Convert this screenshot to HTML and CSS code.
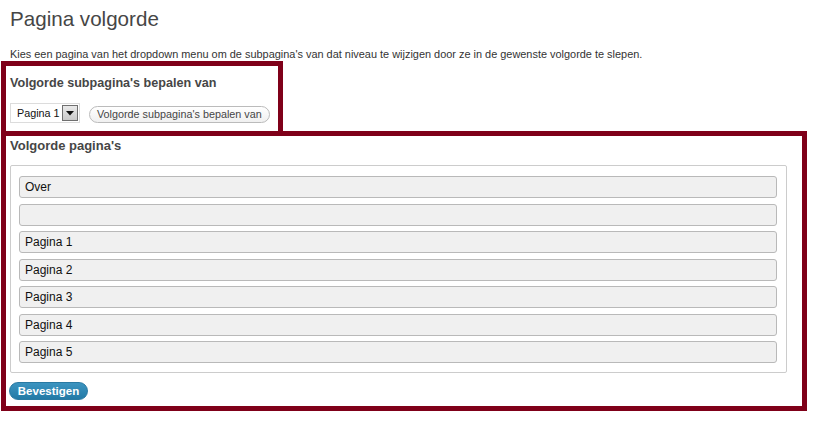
FILE: index.html
```html
<!DOCTYPE html>
<html lang="nl">
<head>
<meta charset="utf-8">
<title>Pagina volgorde</title>
<link rel="stylesheet" href="styles.css">
</head>
<body>
<div class="wrap">
  <h1 class="title">Pagina volgorde</h1>
  <p class="desc">Kies een pagina van het dropdown menu om de subpagina's van dat niveau te wijzigen door ze in de gewenste volgorde te slepen.</p>
  <section class="box box-parent">
    <h3 class="heading">Volgorde subpagina's bepalen van</h3>
    <div class="controls">
      <div class="select">
        <span class="select-label">Pagina 1</span>
        <span class="select-arrow">
          <svg width="8" height="5" viewBox="0 0 8 5"><path d="M0 0 H8 L4 4.5 Z" fill="#111"/></svg>
        </span>
      </div>
      <button class="btn-secondary" type="button">Volgorde subpagina's bepalen van</button>
    </div>
  </section>
  <section class="box box-order">
    <h3 class="heading">Volgorde pagina's</h3>
    <ul class="sortlist">
      <li class="item">Over</li>
      <li class="item"></li>
      <li class="item">Pagina 1</li>
      <li class="item">Pagina 2</li>
      <li class="item">Pagina 3</li>
      <li class="item">Pagina 4</li>
      <li class="item">Pagina 5</li>
    </ul>
    <button class="btn-primary" type="button">Bevestigen</button>
  </section>
</div>
</body>
</html>
```
FILE: styles.css
```css
* { box-sizing: border-box; }
html, body { margin: 0; padding: 0; background: #fff; }
body {
  font-family: "Liberation Sans", Arial, sans-serif;
  color: #333;
  width: 815px;
  height: 423px;
  overflow: hidden;
}
.wrap { padding-left: 1px; }
.title {
  margin: 0;
  padding: 6px 0 0 9px;
  font-size: 20.6px;
  line-height: 26px;
  font-weight: normal;
  color: #464646;
}
.desc {
  margin: 15px 0 0 9px;
  font-size: 10.93px;
  line-height: 14px;
  color: #333;
}
.box {
  border: 5px solid #7f0019;
  background: #fff;
}
.box-parent {
  width: 282px;
  border-bottom: 0;
  padding: 9px 4px 8px 4px;
}
.box-order {
  width: 806px;
  padding: 2px 15px 6px 4px;
}
.heading {
  margin: 0;
  font-size: 13px;
  line-height: 16px;
  font-weight: bold;
  color: #464646;
  white-space: nowrap;
}
.box-parent .heading { font-size: 12.6px; }
.controls {
  display: flex;
  align-items: center;
  gap: 9px;
  margin-top: 12px;
}
.select {
  flex: none;
  display: flex;
  align-items: center;
  width: 70px;
  height: 20px;
  border: 1px solid #dcdcdc;
  background: #fff;
  padding: 0 1px 0 6px;
  justify-content: space-between;
}
.select-label { font-size: 10.8px; color: #111; }
.select-arrow {
  display: flex;
  align-items: center;
  justify-content: center;
  width: 16px;
  height: 16px;
  border: 1px solid #6f6f6f;
  background: linear-gradient(#e9e9e9, #c9c9c9);
}
.btn-secondary {
  flex: none;
  white-space: nowrap;
  margin-top: 3px;
  height: 17px;
  padding: 0 7px;
  border: 1px solid #bbb;
  border-radius: 9px;
  background: linear-gradient(#fff, #f0f0f0);
  font-family: "Liberation Sans", Arial, sans-serif;
  font-size: 10.8px;
  color: #464646;
  line-height: 15px;
}
.sortlist {
  list-style: none;
  margin: 11px 0 0 0;
  padding: 10px 9px 9px 8px;
  border: 1px solid #cccccc;
  border-radius: 2px;
  display: flex;
  flex-direction: column;
  gap: 5.5px;
}
.item {
  height: 22px;
  border: 1px solid #b9b9b9;
  border-radius: 3px;
  background: #f0f0f0;
  padding: 0 5px;
  font-size: 12px;
  line-height: 20px;
  color: #111;
}
.btn-primary {
  display: block;
  margin-top: 9px;
  margin-left: -1px;
  width: 79px;
  height: 18px;
  padding: 0;
  border: 1px solid #2a7aa3;
  border-radius: 9px;
  background: linear-gradient(#3c94c0, #237aa6);
  color: #fff;
  font-family: "Liberation Sans", Arial, sans-serif;
  font-size: 11.5px;
  font-weight: bold;
  line-height: 16px;
}
```
